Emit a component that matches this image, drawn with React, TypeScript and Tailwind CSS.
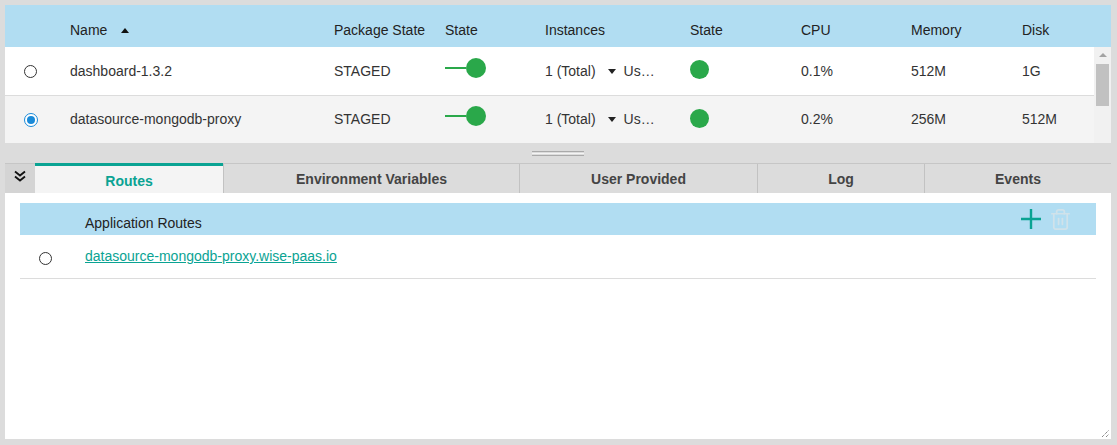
import { Trash2 } from 'lucide-react';

const cols = 'grid grid-cols-[65px_264px_111px_100px_145px_111px_110px_111px_1fr] items-center';

const apps = [
  { name: 'dashboard-1.3.2', cpu: '0.1%', memory: '512M', disk: '1G', selected: false, bg: 'bg-white' },
  { name: 'datasource-mongodb-proxy', cpu: '0.2%', memory: '256M', disk: '512M', selected: true, bg: 'bg-[#f4f4f4]' },
];

const tabs = [
  { label: 'Environment Variables', width: 'w-[296px]' },
  { label: 'User Provided', width: 'w-[238px]' },
  { label: 'Log', width: 'w-[167px]' },
  { label: 'Events', width: 'flex-1' },
];

function Radio({ checked }: { checked: boolean }) {
  if (checked) {
    return (
      <span className="flex h-[14px] w-[14px] items-center justify-center rounded-full border border-[#1a8ad8] bg-white">
        <span className="h-[8px] w-[8px] rounded-full bg-[#1a8ad8]" />
      </span>
    );
  }
  return <span className="block h-[13px] w-[13px] rounded-full border border-[#333] bg-white" />;
}

function Toggle() {
  return (
    <div className="flex items-center -mt-[7px]">
      <div className="h-[2px] w-[21px] bg-[#2aa84a]" />
      <div className="h-[20px] w-[20px] rounded-full bg-[#2aa84a]" />
    </div>
  );
}

export default function App() {
  return (
    <div className="flex h-[445px] flex-col bg-[#dcdcdc] pb-[6px] pl-[5px] pr-[6px] pt-[5px] font-['Liberation_Sans',Arial,sans-serif] text-[14px] text-[#333]">
      {/* Applications table */}
      <div className="flex h-[138px] flex-col">
        <div className={`${cols} h-[42px] bg-[#b1ddf2] pt-[8px] text-[#222]`}>
          <div />
          <div className="flex items-center gap-[14px]">
            Name
            <span className="h-0 w-0 border-x-[4px] border-b-[5px] border-x-transparent border-b-[#111]" />
          </div>
          <div>Package State</div>
          <div>State</div>
          <div>Instances</div>
          <div>State</div>
          <div>CPU</div>
          <div>Memory</div>
          <div>Disk</div>
        </div>
        <div className="flex flex-1">
          <div className="flex-1">
            {apps.map((app, i) => (
              <div
                key={app.name}
                className={`${cols} ${app.bg} ${i === 0 ? 'h-[49px] border-b border-[#dcdcdc]' : 'h-[47px]'}`}
              >
                <div className="flex pl-[19px] pt-[1px]">
                  <Radio checked={app.selected} />
                </div>
                <div>{app.name}</div>
                <div>STAGED</div>
                <div>
                  <Toggle />
                </div>
                <div className="flex items-center">
                  <span>1 (Total)</span>
                  <span className="ml-[12px] h-0 w-0 border-x-[4px] border-t-[5px] border-x-transparent border-t-[#222]" />
                  <span className="ml-[8px]">Us…</span>
                </div>
                <div>
                  <div className="-mt-[3px] h-[19px] w-[19px] rounded-full bg-[#2aa84a]" />
                </div>
                <div>{app.cpu}</div>
                <div>{app.memory}</div>
                <div>{app.disk}</div>
              </div>
            ))}
          </div>
          {/* scrollbar */}
          <div className="flex w-[17px] flex-col items-center bg-[#f1f1f1]">
            <span className="mt-[6px] h-0 w-0 border-x-[4px] border-b-[4px] border-x-transparent border-b-[#a3a3a3]" />
            <div className="mt-[7px] h-[42px] w-[13px] bg-[#c1c1c1]" />
          </div>
        </div>
      </div>

      {/* Splitter */}
      <div className="flex h-[20px] items-center justify-center">
        <div className="flex w-[52px] flex-col gap-[1px]">
          <div className="h-[1px] bg-[#aaa]" />
          <div className="h-[1px] bg-[#f4f4f4]" />
          <div className="h-[1px] bg-[#aaa]" />
        </div>
      </div>

      {/* Tab bar */}
      <div className="flex h-[30px] border-t border-[#c6c6c6] text-[14px] font-bold text-[#444]">
        <div className="flex w-[30px] items-start justify-center bg-[#d4d4d4] pt-[5px]">
          <svg width="14" height="14" viewBox="0 0 14 14" fill="none" stroke="#111" strokeWidth="1.8">
            <path d="M2 2.5l5 4 5-4" />
            <path d="M2 7.5l5 4 5-4" />
          </svg>
        </div>
        <div className="-mt-[1px] flex w-[188px] items-center justify-center border-t-[3px] border-[#0aa393] bg-[#f4f4f4] pt-[4px] text-[#0aa393]">
          Routes
        </div>
        {tabs.map((tab) => (
          <div
            key={tab.label}
            className={`flex ${tab.width} items-center justify-center border-l border-[#c2c2c2] pt-[1px]`}
          >
            {tab.label}
          </div>
        ))}
      </div>

      {/* Routes panel */}
      <div className="relative flex-1 bg-white px-[15px] pt-[10px]">
        <div className="flex h-[32px] items-center bg-[#b1ddf2] pl-[65px] pr-[27px] pt-[8px] text-[#222]">
          <span className="flex-1">Application Routes</span>
          <div className="-mt-[8px] flex items-center gap-[11px]">
            <svg width="20" height="20" viewBox="0 0 20 20" stroke="#0aa393" strokeWidth="2.4">
              <path d="M10 0v20M0 10h20" />
            </svg>
            <Trash2 className="h-[23px] w-[23px] -mx-[3px] text-[#d0e2ea]" strokeWidth={1.8} />
          </div>
        </div>
        <div className="flex h-[44px] items-center border-b border-[#dcdcdc]">
          <div className="flex w-[65px] pl-[19px] pt-[3px]">
            <Radio checked={false} />
          </div>
          <a className="text-[#0aa393] underline">datasource-mongodb-proxy.wise-paas.io</a>
        </div>
        {/* resize grip */}
        <svg className="absolute bottom-[1px] right-[1px]" width="9" height="9" viewBox="0 0 9 9" stroke="#555" strokeWidth="1" strokeDasharray="1 1">
          <path d="M1 8L8 1" />
          <path d="M5 8L8 5" />
        </svg>
      </div>
    </div>
  );
}
